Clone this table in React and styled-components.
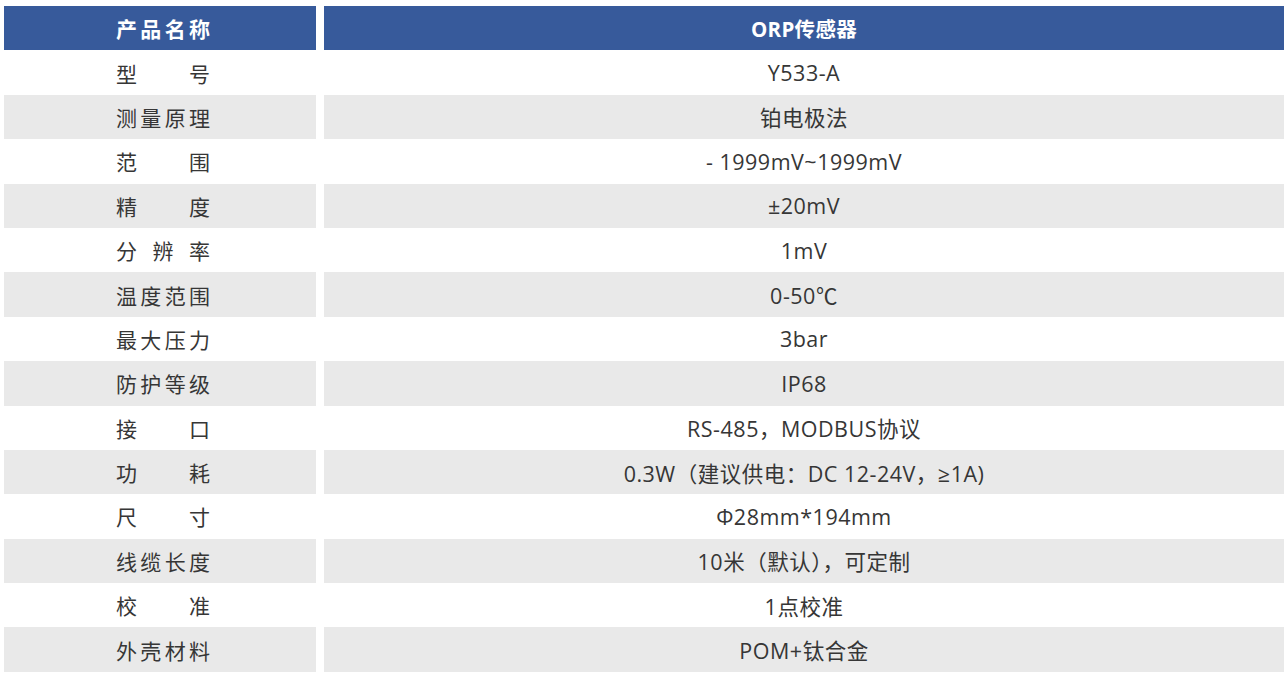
import React from 'react';
import styled, { createGlobalStyle } from 'styled-components';

const GlobalStyle = createGlobalStyle`
  html, body {
    margin: 0;
    padding: 0;
    background: #ffffff;
  }
  body {
    font-family: "Open Sans", "Noto Sans CJK SC", sans-serif;
  }
`;

const Page = styled.div`
  padding: 6px 4px 0 4px;
  width: 1280px;
`;

const Table = styled.div`
  display: grid;
  grid-template-columns: 312px 960px;
  grid-auto-rows: 44.4px;
  column-gap: 8px;
`;

const Cell = styled.div`
  display: flex;
  align-items: center;
  justify-content: center;
  padding-left: ${p => (p.$side ? '6px' : '0')};
  background: ${p => (p.$head ? '#375a9b' : p.$shade ? '#e9e9e9' : '#ffffff')};
  color: ${p => (p.$head ? '#ffffff' : '#363636')};
  font-size: ${p => (p.$head ? '20.5px' : '21.5px')};
  font-weight: ${p => (p.$head ? 700 : 400)};
  letter-spacing: ${p => (p.$head ? '0.3px' : '0.5px')};
  white-space: nowrap;
`;

const Label = styled.span`
  display: inline-block;
  width: 94px;
  text-align: justify;
  text-align-last: justify;
  text-justify: inter-character;
  letter-spacing: 0;
  font-size: 21px;
`;

const rows = [
  ['型号', 'Y533-A'],
  ['测量原理', '铂电极法'],
  ['范围', '- 1999mV~1999mV'],
  ['精度', '±20mV'],
  ['分辨率', '1mV'],
  ['温度范围', '0-50℃'],
  ['最大压力', '3bar'],
  ['防护等级', 'IP68'],
  ['接口', 'RS-485，MODBUS协议'],
  ['功耗', '0.3W（建议供电：DC 12-24V，≥1A)'],
  ['尺寸', 'Φ28mm*194mm'],
  ['线缆长度', '10米（默认），可定制'],
  ['校准', '1点校准'],
  ['外壳材料', 'POM+钛合金'],
];

export default function App() {
  return (
    <Page>
      <GlobalStyle />
      <Table>
        <Cell $head $side><Label>产品名称</Label></Cell>
        <Cell $head>ORP传感器</Cell>
        {rows.map(([name, value], i) => (
          <React.Fragment key={name}>
            <Cell $side $shade={i % 2 === 1}><Label>{name}</Label></Cell>
            <Cell $shade={i % 2 === 1}>{value}</Cell>
          </React.Fragment>
        ))}
      </Table>
    </Page>
  );
}
